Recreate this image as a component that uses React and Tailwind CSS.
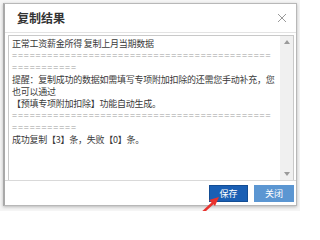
import React from "react";

const font = { fontFamily: '"Noto Sans CJK SC", "Microsoft YaHei", sans-serif' };

const lines = [
  { text: "正常工资薪金所得 复制上月当期数据" },
  { text: "============================================", dim: true },
  { text: "===========", dim: true },
  { text: "提醒：复制成功的数据如需填写专项附加扣除的还需您手动补充，您" },
  { text: "也可以通过" },
  { text: "【预填专项附加扣除】功能自动生成。" },
  { text: "============================================", dim: true },
  { text: "===========", dim: true },
  { text: "成功复制【3】条，失败【0】条。" },
];

const App = () => {
  return (
    <div
      className="relative w-[300px] h-[211px] overflow-hidden bg-[#f5f5f5]"
      style={font}
    >
      <div className="ml-[3px] mt-[3px] w-[294px] h-[203px] flex flex-col bg-white border border-[#b8b8b8] border-l-2 border-l-[#a9a9a9] shadow-[0_1px_3px_rgba(0,0,0,0.25)]">
        {/* Header */}
        <div className="h-[29px] shrink-0 flex items-center justify-between pl-[12px] pr-[9px] border-b border-[#e3e3e3]">
          <span className="text-[12px] font-bold text-[#333]">复制结果</span>
          <svg width="10" height="10" viewBox="0 0 10 10">
            <path d="M1 1L9 9M9 1L1 9" stroke="#9a9a9a" strokeWidth="1" />
          </svg>
        </div>

        {/* Body */}
        <div className="flex-1 pl-[3px] pr-[2px] pt-[2px] flex">
          <div className="flex-1 flex border border-b-0 border-[#c9c9c9]">
            <div className="flex-1 pl-[3px] pt-[2px] text-[9px] leading-[12px] tracking-[-0.25px] text-[#3a3a3a] whitespace-nowrap overflow-hidden">
              {lines.map((l, i) => (
                <div
                  key={i}
                  className={l.dim ? "h-[12px] text-[#9a9a9a] tracking-[0.9px]" : "h-[12px]"}
                >
                  {l.text}
                </div>
              ))}
            </div>
            <div className="w-[13px] bg-[#f0f0f0] flex flex-col justify-between items-center py-[4px]">
              <svg width="6" height="4" viewBox="0 0 6 4">
                <path d="M0 4L3 0L6 4Z" fill="#9a9a9a" />
              </svg>
              <svg width="6" height="4" viewBox="0 0 6 4">
                <path d="M0 0L6 0L3 4Z" fill="#9a9a9a" />
              </svg>
            </div>
          </div>
        </div>

        {/* Footer */}
        <div className="h-[25px] shrink-0 border-t border-[#d9d9d9] flex justify-end items-start pt-[4px] pr-[2px] gap-[6px]">
          <button className="w-[39px] h-[17px] bg-[#1a5fb4] border border-[#134d94] text-white text-[9px] leading-[15px]">
            保存
          </button>
          <button className="w-[40px] h-[17px] bg-[#5b96d2] text-white text-[9px] leading-[17px]">
            关闭
          </button>
        </div>
      </div>

      {/* Red arrow pointing at the save button */}
      <svg
        className="absolute left-[195px] top-[193px]"
        width="28"
        height="20"
        viewBox="0 0 28 20"
      >
        <path d="M7 20L19 9" stroke="#e8322d" strokeWidth="2.5" />
        <path d="M24 4L14 7L20 13Z" fill="#e8322d" />
      </svg>
    </div>
  );
};

export default App;
